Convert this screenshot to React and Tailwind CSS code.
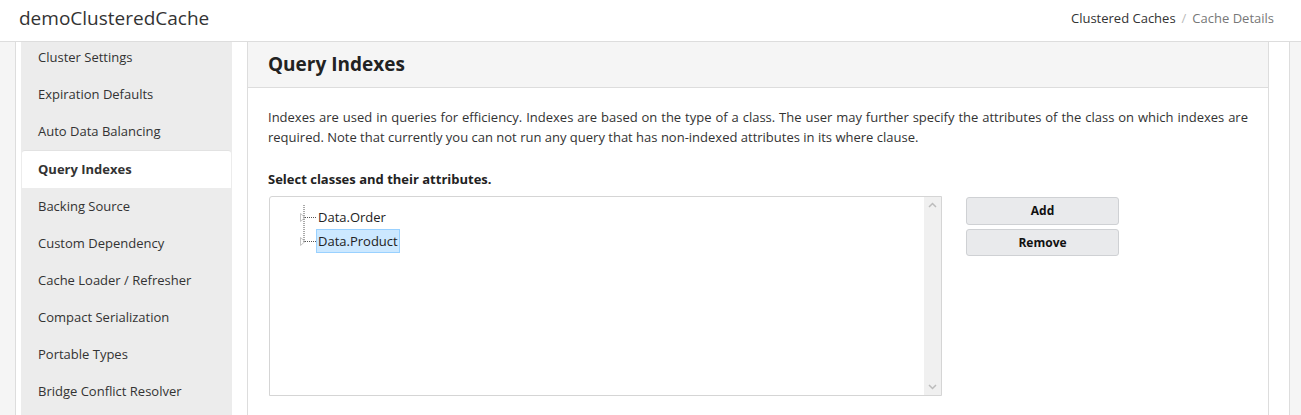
import React from "react";

const items = [
  "Cluster Settings",
  "Expiration Defaults",
  "Auto Data Balancing",
  "Query Indexes",
  "Backing Source",
  "Custom Dependency",
  "Cache Loader / Refresher",
  "Compact Serialization",
  "Portable Types",
  "Bridge Conflict Resolver",
];

function TreeRow({ label, selected }) {
  return (
    <div className="flex items-center h-[24px]">
      <svg width="16" height="11" viewBox="0 0 16 11" className="shrink-0">
        <path d="M0.5 1.5 L5 5.5 L0.5 9.5 Z" fill="none" stroke="#c4c4c4" strokeWidth="1" />
        <line x1="5" y1="5.5" x2="16" y2="5.5" stroke="#555" strokeWidth="1" strokeDasharray="1 1" />
      </svg>
      <span
        className={
          "px-[1px] h-[24px] leading-[22px] text-[13px] text-[#222] border " +
          (selected ? "bg-[#cce8ff] border-[#99d1ff]" : "border-transparent")
        }
      >
        {label}
      </span>
    </div>
  );
}

export default function App() {
  return (
    <div className="w-[1301px] h-[415px] overflow-hidden bg-white text-[#333] font-['Open_Sans',sans-serif]">
      <header className="h-[42px] border-b border-[#dddddd] flex items-center justify-between pl-[19px] pr-[27px]">
        <div className="text-[19px] text-[#333] leading-none -mt-[4px]">demoClusteredCache</div>
        <div className="text-[13px] -mt-[4px]">
          <span className="text-[#333]">Clustered Caches</span>
          <span className="text-[#bbb] px-[6px]">/</span>
          <span className="text-[#777]">Cache Details</span>
        </div>
      </header>
      <div className="flex h-[373px] bg-[#f5f5f5]">
        <div className="w-[16px] shrink-0 border-r border-[#dddddd]" />
        <div className="w-[1274px] shrink-0 bg-white border-r border-[#dddddd] flex pl-[5px] pr-[20px]">
          <nav className="w-[211px] shrink-0 bg-[#ececec] overflow-hidden">
            <div className="-mt-[3px]">
              {items.map((it, i) => {
                const active = it === "Query Indexes";
                return (
                  <div
                    key={it}
                    className={
                      "flex items-center text-[13px] " +
                      (i === 3 ? "h-[38px] " : "h-[37px] ") +
                      (active
                        ? "bg-white font-bold text-[#333] rounded-t-[3px] border-t border-[#e2e2e2] mx-[1px] pl-[16px] pt-[1px]"
                        : "text-[#333] pl-[17px]")
                    }
                  >
                    {it}
                  </div>
                );
              })}
            </div>
          </nav>
          <div className="w-[15px] shrink-0" />
          <section className="flex-1 border-l border-r border-[#dddddd] flex flex-col">
            <div className="h-[46px] bg-[#f5f5f5] border-b border-[#dddddd] flex items-center pl-[20px]">
              <h2 className="text-[19px] font-bold text-[#222] leading-none -mt-[1px]">Query Indexes</h2>
            </div>
            <div className="px-[20px] pt-[19px]">
              <p className="text-[13px] leading-[20px] text-[#333] text-justify">
                Indexes are used in queries for efficiency. Indexes are based on the type of a class. The user may further specify the attributes of the class on which indexes are required. Note that currently you can not run any query that has non-indexed attributes in its where clause.
              </p>
              <div className="mt-[22px] text-[13px] font-bold text-[#222] leading-[20px]">
                Select classes and their attributes.
              </div>
              <div className="mt-[7px] ml-[1px] flex gap-[24px]">
                <div className="relative w-[673px] h-[200px] border border-[#d5d5d5] rounded-tl-[3px] flex">
                  <div className="flex-1 pl-[30px] pt-[8px] relative">
                    <svg className="absolute left-[33px] top-[8px]" width="2" height="38">
                      <line x1="1" y1="0" x2="1" y2="38" stroke="#555" strokeWidth="1" strokeDasharray="1 1" />
                    </svg>
                    <TreeRow label="Data.Order" />
                    <TreeRow label="Data.Product" selected />
                  </div>
                  <div className="w-[17px] bg-[#f0f0f0] flex flex-col justify-between items-center py-[5px]">
                    <svg width="9" height="6" viewBox="0 0 9 6">
                      <path d="M1 5 L4.5 1.5 L8 5" fill="none" stroke="#bcbcbc" strokeWidth="1.5" />
                    </svg>
                    <svg width="9" height="6" viewBox="0 0 9 6">
                      <path d="M1 1 L4.5 4.5 L8 1" fill="none" stroke="#bcbcbc" strokeWidth="1.5" />
                    </svg>
                  </div>
                </div>
                <div className="flex flex-col gap-[4px] pt-[1px]">
                  <button className="w-[153px] h-[28px] bg-[#e9eaec] border border-[#cfd1d4] rounded-[3px] text-[12px] font-bold text-[#111]">
                    Add
                  </button>
                  <button className="w-[153px] h-[27px] bg-[#e9eaec] border border-[#cfd1d4] rounded-[3px] text-[12px] font-bold text-[#111]">
                    Remove
                  </button>
                </div>
              </div>
            </div>
          </section>
        </div>
      </div>
    </div>
  );
}
